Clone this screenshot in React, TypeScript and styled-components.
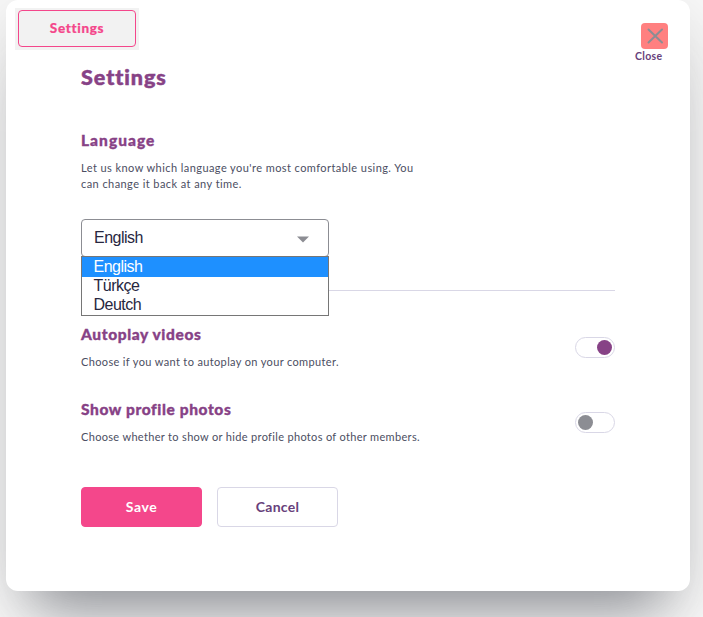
import React, { useState } from 'react';
import styled, { createGlobalStyle } from 'styled-components';

const GlobalStyle = createGlobalStyle`
  * { box-sizing: border-box; }
  body { margin: 0; background: #f8f8f8; font-family: Lato, sans-serif; overflow: hidden; }
  button { font-family: inherit; cursor: pointer; }
`;

const Page = styled.main`
  height: 617px;
  padding-left: 6px;
  overflow: hidden;
`;

const Card = styled.section`
  width: 684px;
  height: 591px;
  padding: 8px 9px 0;
  background: #fff;
  border-radius: 12px;
  box-shadow: 0 46px 54px -30px rgba(128, 130, 137, 0.86), 0 15px 60px rgba(0, 0, 0, 0.12);
`;

const TopBar = styled.header`
  display: flex;
  justify-content: space-between;
  align-items: flex-start;
  height: 56px;
`;

const TabFrame = styled.div`
  width: 124px;
  height: 42px;
  padding: 2px 3px 3px;
  background: #f2f2f2;
`;

const Tab = styled.button`
  width: 118px;
  height: 37px;
  padding: 0 0 2px;
  border: 1px solid #f4478b;
  border-radius: 4px;
  background: #f2f2f2;
  color: #f4478b;
  font-size: 13.5px;
  font-weight: 900;
  letter-spacing: 0.65px;
  -webkit-text-stroke: 0.2px;
`;

const CloseButton = styled.button`
  display: flex;
  flex-direction: column;
  align-items: flex-end;
  width: 40px;
  margin: 15px 13px 0 0;
  padding: 0;
  border: 0;
  background: none;
`;

const CloseIcon = styled.svg`
  width: 27px;
  height: 26px;
  border-radius: 4px;
  background: #ff8080;
`;

const CloseLabel = styled.span`
  align-self: flex-start;
  margin: 1px 0 0 7px;
  color: #67417b;
  font-size: 10.5px;
  font-weight: 700;
  line-height: 13px;
  letter-spacing: 0.3px;
`;

const Content = styled.div`
  width: 534px;
  margin-left: 66px;
`;

const Title = styled.h1`
  height: 28px;
  margin: 0 0 36px;
  color: #874286;
  font-size: 21.5px;
  line-height: 27px;
  font-weight: 900;
  letter-spacing: 0.95px;
  -webkit-text-stroke: 0.5px;
`;

const Heading = styled.h2<{ $spacing: string }>`
  margin: 0 0 8px;
  color: #874286;
  font-size: 15.5px;
  line-height: 24px;
  font-weight: 900;
  letter-spacing: ${({ $spacing }) => $spacing};
  -webkit-text-stroke: 0.35px;
`;

const Description = styled.p<{ $spacing: string }>`
  margin: 0;
  color: #4b4e62;
  font-size: 11px;
  line-height: 16px;
  white-space: nowrap;
  letter-spacing: ${({ $spacing }) => $spacing};
`;

const LanguageSection = styled.section`
  height: 163px;
  border-bottom: 1px solid #d9d7e6;
`;

const Picker = styled.div`
  position: relative;
  width: 248px;
  margin-top: 27px;
  color: #27273f;
  font: 16px 'Liberation Sans', sans-serif;
  letter-spacing: -0.5px;
`;

const Select = styled.button`
  display: flex;
  align-items: center;
  justify-content: space-between;
  width: 100%;
  height: 38px;
  padding: 0 19px 0 12px;
  border: 1px solid #8c8d93;
  border-radius: 4px;
  background: #fff;
  color: inherit;
  letter-spacing: inherit;
  && { font: inherit; }
`;

const Arrow = styled.svg`
  width: 12px;
  height: 7px;
  margin-top: 2px;
`;

const Options = styled.ul`
  position: absolute;
  top: 37px;
  left: 0;
  width: 100%;
  height: 60px;
  margin: 0;
  padding: 0;
  border: 1px solid #767676;
  background: #fff;
  list-style: none;
`;

const Option = styled.li<{ $selected: boolean }>`
  height: ${({ $selected }) => ($selected ? '20px' : '19px')};
  padding-left: 11.5px;
  line-height: ${({ $selected }) => ($selected ? '20px' : '18px')};
  color: ${({ $selected }) => ($selected ? '#fff' : 'inherit')};
  background: ${({ $selected }) => ($selected ? '#1e90ff' : '#fff')};
`;

const SettingRow = styled.section`
  display: flex;
  justify-content: space-between;
  height: 75px;
`;

const Preferences = styled.div`
  padding-top: 31px;
`;

const Switch = styled.button<{ $on: boolean }>`
  display: flex;
  align-items: center;
  justify-content: ${({ $on }) => ($on ? 'flex-end' : 'flex-start')};
  width: 40px;
  height: 21px;
  margin-top: 15px;
  padding: 0 2px;
  border: 1px solid #d9d7e6;
  border-radius: 11px;
  background: #fff;
`;

const Knob = styled.span<{ $on: boolean }>`
  width: 15px;
  height: 15px;
  border-radius: 50%;
  background: ${({ $on }) => ($on ? '#874286' : '#8c8d93')};
`;

const Actions = styled.footer`
  display: flex;
  gap: 15px;
  margin-top: 15px;
`;

const Action = styled.button<{ $primary?: boolean }>`
  width: 121px;
  height: 40px;
  padding: 0 0 1px;
  border: 1px solid ${({ $primary }) => ($primary ? '#f4478b' : '#d9d7e6')};
  border-radius: 4px;
  background: ${({ $primary }) => ($primary ? '#f4478b' : '#fff')};
  color: ${({ $primary }) => ($primary ? '#fff' : '#67417b')};
  font-size: 14px;
  font-weight: 700;
  letter-spacing: ${({ $primary }) => ($primary ? '0.6px' : '0.25px')};
`;

const languages = ['English', 'Türkçe', 'Deutch'];

export default function App() {
  const [language, setLanguage] = useState('English');
  const [autoplay, setAutoplay] = useState(true);
  const [photos, setPhotos] = useState(false);

  return (
    <Page>
      <GlobalStyle />
      <Card>
        <TopBar>
          <TabFrame><Tab>Settings</Tab></TabFrame>
          <CloseButton>
            <CloseIcon viewBox="0 0 27 26" fill="none" stroke="#8c8d93" strokeWidth="2" strokeLinecap="round">
              <path d="M7.5 6.5L21 19.5M21 6.5L7.5 19.5" />
            </CloseIcon>
            <CloseLabel>Close</CloseLabel>
          </CloseButton>
        </TopBar>
        <Content>
          <Title>Settings</Title>
          <LanguageSection>
            <Heading $spacing="1.02px">Language</Heading>
            <Description $spacing="0.43px">
              Let us know which language you're most comfortable using. You<br />can change it back at any time.
            </Description>
            <Picker>
              <Select aria-expanded="true">
                {language}
                <Arrow viewBox="0 0 12 7"><path d="M0 0.5H12L6 6.5Z" fill="#8c8d93" /></Arrow>
              </Select>
              <Options>
                {languages.map((item) => (
                  <Option key={item} $selected={item === language} onClick={() => setLanguage(item)}>{item}</Option>
                ))}
              </Options>
            </Picker>
          </LanguageSection>
          <Preferences>
            <SettingRow>
              <div>
                <Heading $spacing="0.62px">Autoplay videos</Heading>
                <Description $spacing="0.36px">Choose if you want to autoplay on your computer.</Description>
              </div>
              <Switch $on={autoplay} aria-label="Autoplay videos" onClick={() => setAutoplay(!autoplay)}><Knob $on={autoplay} /></Switch>
            </SettingRow>
            <SettingRow>
              <div>
                <Heading $spacing="0.61px">Show profile photos</Heading>
                <Description $spacing="0.33px">Choose whether to show or hide profile photos of other members.</Description>
              </div>
              <Switch $on={photos} aria-label="Show profile photos" onClick={() => setPhotos(!photos)}><Knob $on={photos} /></Switch>
            </SettingRow>
          </Preferences>
          <Actions>
            <Action $primary>Save</Action>
            <Action>Cancel</Action>
          </Actions>
        </Content>
      </Card>
    </Page>
  );
}
